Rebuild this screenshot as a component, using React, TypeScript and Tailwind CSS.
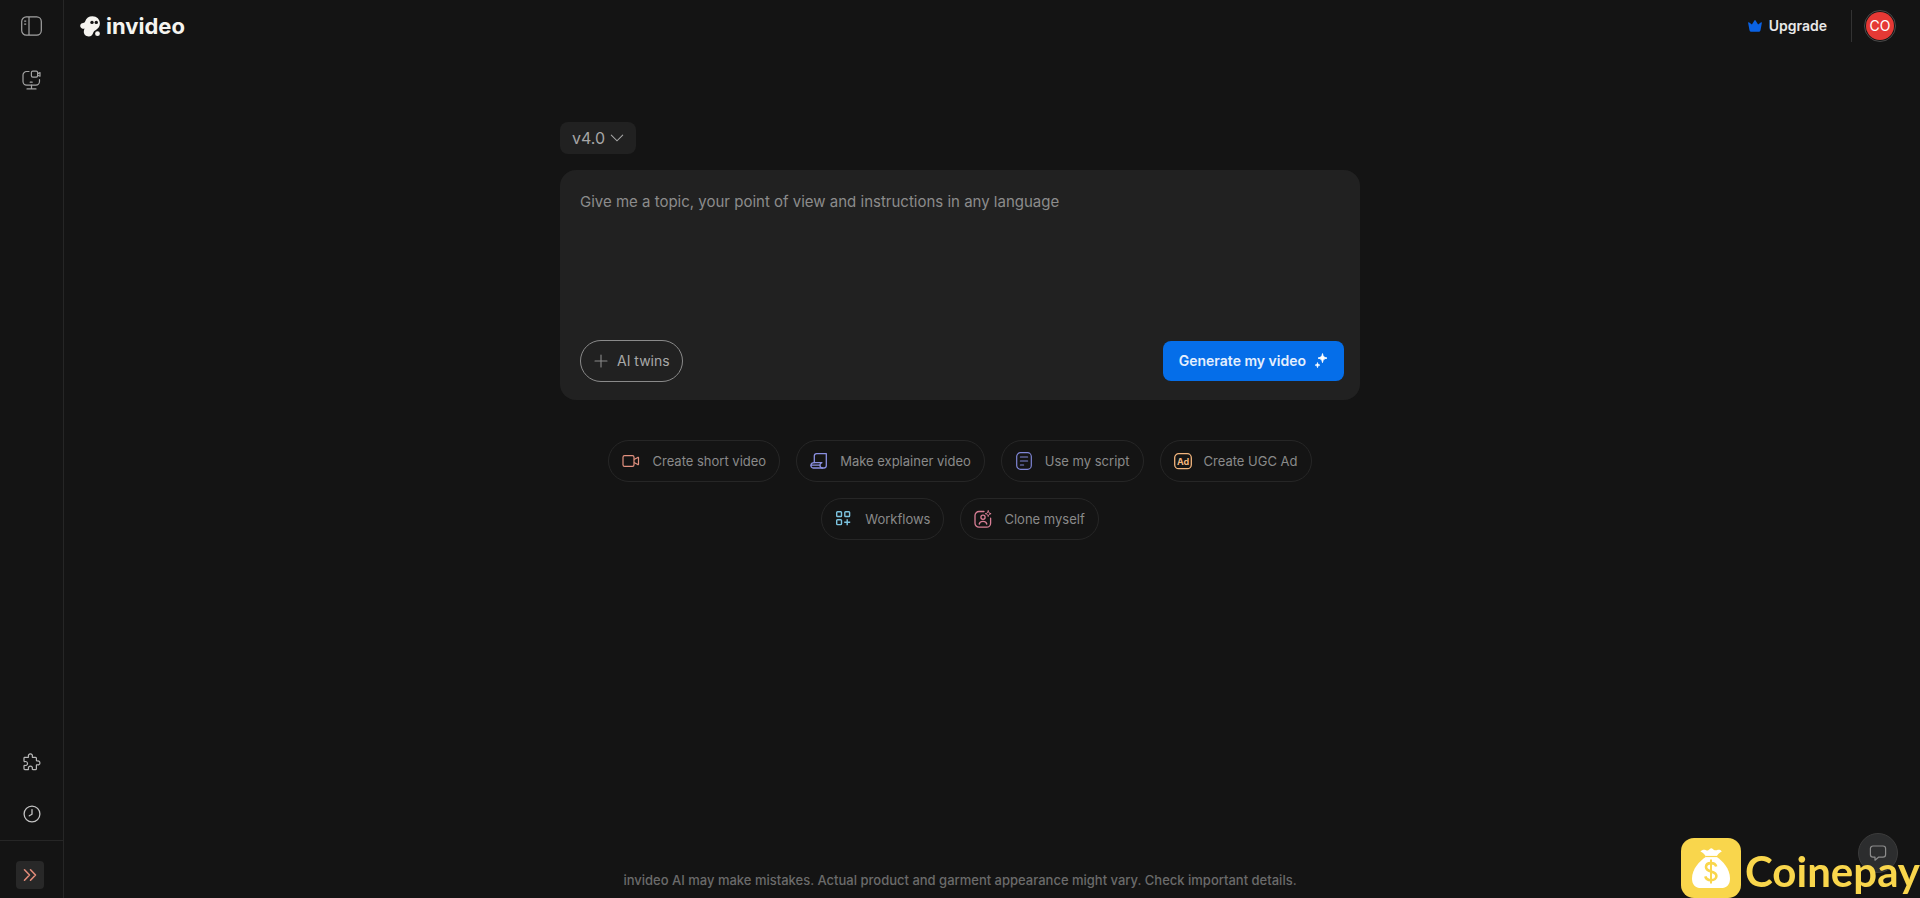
import type { ReactNode } from "react";

type Suggestion = {
  label: string;
  icon: ReactNode;
};

function SidebarIcon() {
  return (
    <svg width="21" height="20" viewBox="0 0 21 20" fill="none" stroke="#a3a3a3" strokeWidth="1.2">
      <rect x="0.7" y="0.9" width="19.6" height="18.2" rx="4.6" />
      <path d="M8 1v18" />
      <path d="M3.2 5.2h2M3.2 8.2h2" />
    </svg>
  );
}

function StudioIcon() {
  return (
    <svg width="19" height="20" viewBox="0 0 19 20" fill="none" stroke="#a3a3a3" strokeWidth="1.2" strokeLinecap="round" strokeLinejoin="round">
      <path d="M7 1.500H4.600A3.600 3.600 0 0 0 1 5.100v6.400a3.600 3.600 0 0 0 3.600 3.600h9.300a3.600 3.600 0 0 0 3.600-3.600V9.600" />
      <rect x="9.400" y="1.200" width="6.200" height="6" rx="1.400" />
      <path d="M15.600 3.600l2.400-1v3.600l-2.400-1" />
      <path d="M8.200 12.200h2M9.500 15.200v3.600M5 18.900h9" />
    </svg>
  );
}

function PuzzleIcon() {
  return (
    <svg width="18" height="18" viewBox="0 0 18 18" fill="none" stroke="#b8b8b8" strokeWidth="1.2" strokeLinejoin="round">
      <path d="M1.400 4.400h3.500c.5 0 .8-.4.6-.9a2 2 0 1 1 3.800 0c-.2.500.1.900.6.900h2.600c.5 0 .9.400.9.900v2c0 .5.400.8.900.7a2 2 0 1 1 0 3.800c-.5-.2-.9.100-.9.600v3.300c0 .5-.4.900-.9.900H10c-.5 0-.8-.4-.7-.9a2 2 0 1 0-3.800 0c.2.500-.1.900-.6.900H1.900c-.5 0-.9-.4-.9-.9v-2.600c0-.5.400-.8.900-.7a2 2 0 1 0 0-3.800c-.5.200-.9-.1-.9-.6V4.900z" />
    </svg>
  );
}

function ClockIcon() {
  return (
    <svg width="18" height="18" viewBox="0 0 18 18" fill="none" stroke="#c4c4c4" strokeWidth="1.3" strokeLinecap="round" strokeLinejoin="round">
      <circle cx="9" cy="9" r="7.9" />
      <path d="M9 4.6v4.6L6.3 10.8" />
    </svg>
  );
}

function Mascot() {
  return (
    <svg width="21" height="21" viewBox="0 0 21 21">
      <path
        d="M12.400.3c4.500 0 7.500 3.200 7.500 7.300 0 3-1.600 5-3.700 6.100-1.600.900-2.600 1.700-3 3.100-.6 2.200-2.100 3.700-4.500 3.700-2.900 0-4.900-2.100-4.900-4.700 0-1.300.3-2.300.8-3.300-.7.300-1.300.4-2 .200C1.100 12.300.2 11.200.2 9.800c0-1.700 1.300-2.800 3-2.900.9-.1 1.500-.5 1.900-1.500C6.200 2.200 8.900.3 12.400.3z"
        fill="#f5f4f0"
      />
      <circle cx="17.500" cy="17.700" r="2.400" fill="#f5f4f0" />
      <circle cx="12" cy="6.400" r="1.700" fill="#141414" />
      <circle cx="16.300" cy="6.400" r="1.700" fill="#141414" />
    </svg>
  );
}

function CrownIcon() {
  return (
    <svg width="14" height="12" viewBox="0 0 14 12" fill="#0a62e4">
      <path d="M.9 2.300 3.900 4.400 6.400.6a.7.7 0 0 1 1.200 0l2.500 3.800 3-2.100c.4-.3.900 0 .8.5l-1.400 7.500A1.800 1.800 0 0 1 10.700 11.800H3.300A1.800 1.800 0 0 1 1.500 10.300L.1 2.800c-.1-.5.4-.8.8-.5z" />
    </svg>
  );
}

function SparklesIcon() {
  return (
    <svg width="14" height="16" viewBox="0 0 14 16" fill="#fff">
      <path d="M8.500.6c.5 3 1.300 3.800 4.500 4.500-3.200.7-4 1.500-4.500 4.500C8 6.600 7.200 5.800 4 5.100 7.200 4.400 8 3.600 8.500.6z" stroke="#fff" strokeWidth=".9" strokeLinejoin="round" />
      <path d="M3.500 9.600c.3 1.600.8 2.100 2.300 2.500-1.500.4-2 .9-2.300 2.500-.3-1.600-.8-2.100-2.300-2.500 1.500-.4 2-.9 2.300-2.500z" stroke="#fff" strokeWidth=".8" strokeLinejoin="round" />
    </svg>
  );
}

const suggestions: Suggestion[] = [
  {
    label: "Create short video",
    icon: (
      <svg width="18" height="18" viewBox="0 0 18 18" fill="none" stroke="#e2917f" strokeWidth="1.2" strokeLinejoin="round">
        <rect x="1" y="3.600" width="11" height="10.800" rx="1.600" />
        <path d="M12 7.600l3.800-2.200c.4-.2.700 0 .7.400v6.400c0 .4-.3.600-.7.400L12 10.400" />
      </svg>
    ),
  },
  {
    label: "Make explainer video",
    icon: (
      <svg width="18" height="18" viewBox="0 0 18 18" fill="none" stroke="#8a8fe0" strokeWidth="1.300" strokeLinejoin="round" strokeLinecap="round">
        <path d="M4.300 10.600V4A2.400 2.400 0 0 1 6.700 1.600h9.600v11.900a2.500 2.500 0 0 1-2.500 2.500H3.200A2.300 2.300 0 0 1 1 13.200h8.900" />
        <path d="M4.300 10.600h7.600c-1.400.5-2 1.500-2 2.600 0 1.500 1 2.500 2.500 2.800" />
        <path d="M1 13.200c.1-1.600 1.200-2.600 3.300-2.600" />
      </svg>
    ),
  },
  {
    label: "Use my script",
    icon: (
      <svg width="18" height="18" viewBox="0 0 18 18" fill="none" stroke="#7f86d6" strokeWidth="1.200" strokeLinecap="round">
        <rect x="1.700" y=".7" width="14.600" height="16.600" rx="3.800" />
        <path d="M5.400 5h7.200M5.400 9h7.200M5.400 13h3.200" />
      </svg>
    ),
  },
  {
    label: "Create UGC Ad",
    icon: (
      <svg width="18" height="18" viewBox="0 0 18 18" fill="none" stroke="#f2b57d" strokeWidth="1.300">
        <rect x=".7" y="1.700" width="16.600" height="15" rx="4" />
        <text x="9" y="13" textAnchor="middle" fontFamily="Inter, sans-serif" fontSize="9" fontWeight="700" fill="#f2b57d" stroke="none">
          Ad
        </text>
      </svg>
    ),
  },
  {
    label: "Workflows",
    icon: (
      <svg width="18" height="18" viewBox="0 0 18 18" fill="none" stroke="#7cc4e0" strokeWidth="1.400">
        <rect x="1.700" y="1.700" width="4.800" height="4.800" rx=".8" />
        <rect x="9.800" y="1.700" width="4.800" height="4.800" rx=".8" />
        <rect x="1.700" y="9.800" width="4.800" height="4.800" rx=".8" />
        <path d="M12.200 9.200v6M9.200 12.200h6" />
      </svg>
    ),
  },
  {
    label: "Clone myself",
    icon: (
      <svg width="18" height="18" viewBox="0 0 18 18" fill="none" stroke="#d97f96" strokeWidth="1.300" strokeLinecap="round" strokeLinejoin="round">
        <path d="M10 1.500H5A4 4 0 0 0 1 5.500v7.700a4 4 0 0 0 4 4h7.600a4 4 0 0 0 4-4V8.200" />
        <circle cx="9" cy="7.300" r="2.100" />
        <path d="M5.200 14c.4-1.700 1.900-2.700 3.800-2.700s3.400 1 3.800 2.700" />
        <path d="M14.200.9c.3 1.800.9 2.400 2.900 2.800-2 .4-2.600 1-2.900 2.800-.3-1.800-.9-2.400-2.900-2.800 2-.4 2.600-1 2.900-2.800z" strokeWidth="1" />
      </svg>
    ),
  },
];

function SuggestionChip({ label, icon }: Suggestion) {
  return (
    <button
      type="button"
      className="flex h-[42px] items-center gap-3 rounded-full border border-[#262626] px-[13px] text-[13px] leading-5 text-[#8a8a8a] hover:bg-[#1c1c1c]"
    >
      {icon}
      <span>{label}</span>
    </button>
  );
}

function Sidebar() {
  return (
    <aside className="flex w-16 shrink-0 flex-col items-center border-r border-[#262626]">
      <button type="button" aria-label="Toggle sidebar" className="mt-4 flex h-5 items-center">
        <SidebarIcon />
      </button>
      <button type="button" aria-label="Studio" className="mt-[34px] flex h-5 items-center">
        <StudioIcon />
      </button>
      <div className="mt-auto flex w-full flex-col items-center gap-[34px] border-b border-[#262626] pb-[17px]">
        <button type="button" aria-label="Extensions">
          <PuzzleIcon />
        </button>
        <button type="button" aria-label="History">
          <ClockIcon />
        </button>
      </div>
      <div className="flex w-full px-4 pt-5 pb-[9px]">
        <button type="button" aria-label="Expand" className="flex size-7 items-center justify-center rounded bg-[#282828]">
          <svg width="14" height="14" viewBox="0 0 14 14" fill="none" stroke="#e08a78" strokeWidth="1.600" strokeLinecap="round" strokeLinejoin="round">
            <path d="M1.500 1.800 6.500 7l-5 5.200M7.500 1.800 12.500 7l-5 5.200" />
          </svg>
        </button>
      </div>
    </aside>
  );
}

function Header() {
  return (
    <header className="flex h-[52px] items-center justify-between pr-6 pl-4">
      <a href="#" className="flex items-center gap-[5px]">
        <Mascot />
        <span className="text-[22px] font-bold text-[#f5f4f0]">invideo</span>
      </a>
      <div className="flex items-center">
        <button type="button" className="flex items-center gap-[7px] text-sm font-semibold text-[#e8e8e8]">
          <CrownIcon />
          Upgrade
        </button>
        <div className="mr-3 ml-6 h-8 w-px bg-[#333]" />
        <button
          type="button"
          aria-label="Account"
          className="flex size-8 items-center justify-center rounded-full border border-[#4a4a4a] p-px"
        >
          <span className="flex size-7 items-center justify-center rounded-full bg-[#e53935] text-sm text-white">CO</span>
        </button>
      </div>
    </header>
  );
}

function Composer() {
  return (
    <div className="w-full max-w-[800px]">
      <button
        type="button"
        className="flex h-8 items-center gap-[5px] rounded-lg bg-[#212121] px-3 text-base text-[#a6a6a6]"
      >
        v4.0
        <svg width="14" height="14" viewBox="0 0 14 14" fill="none" stroke="#a6a6a6" strokeWidth="1.100" strokeLinecap="round">
          <path d="M1.300 4.200 7 9.800l5.700-5.600" />
        </svg>
      </button>
      <div className="mt-4 flex h-[230px] flex-col rounded-2xl bg-[#212121] pt-5 pr-4 pb-[18px] pl-5">
        <textarea
          aria-label="Prompt"
          placeholder="Give me a topic, your point of view and instructions in any language"
          className="w-full flex-1 resize-none bg-transparent text-[15px] leading-6 text-[#d4d4d4] outline-none placeholder:text-[#8c8c8c]"
        />
        <div className="flex items-center justify-between">
          <button
            type="button"
            className="flex h-[42px] items-center gap-2 rounded-full border border-[#8a8a8a] px-3 text-sm text-[#a8a8a8]"
          >
            <svg width="16" height="16" viewBox="0 0 16 16" stroke="#8a8a8a" strokeWidth="1.100" strokeLinecap="round">
              <path d="M8 2v12M2 8h12" />
            </svg>
            AI twins
          </button>
          <button
            type="button"
            className="flex h-10 items-center gap-2 rounded-lg bg-[#056ee9] px-4 text-sm font-semibold text-[#e4effd]"
          >
            Generate my video
            <SparklesIcon />
          </button>
        </div>
      </div>
    </div>
  );
}

function Watermark() {
  return (
    <div className="pointer-events-none fixed right-0 bottom-0 flex items-end gap-1">
      <svg width="60" height="60" viewBox="0 0 60 60">
        <rect width="60" height="60" rx="13" fill="#f9d64c" />
        <path
          d="M19.500 13.500c1.500-1.800 3.500-2 5.500-1.300 1.800.6 2.900-.2 3.800-1.300.8-.9 2.200-.9 3 0 .9 1.100 2.200 1.800 4 1.300 2-.6 3.700-.5 5 1.300-2.500 1.200-4.300 3-5.300 5.500H25c-1-2.500-3-4.300-5.500-5.500z"
          fill="#fff"
        />
        <path
          d="M25 18.700h10.500c6.500 4.500 13.500 12 13.500 22 0 6-3.500 9.300-9 9.300H20c-5.500 0-9-3.300-9-9.300 0-10 7.500-17.500 14-22z"
          fill="#fff"
        />
        <path d="M24.500 18.500h11.500" stroke="#f9d64c" strokeWidth="1.200" />
        <path d="M30 21.500v24" stroke="#f9d64c" strokeWidth="2" />
        <path
          d="M35.200 28.500c-.6-2.200-2.600-3.400-5.200-3.400-3 0-5 1.600-5 4s1.800 3.500 5 4.300c3.500.900 5.400 2 5.400 4.600 0 2.500-2.200 4.200-5.400 4.200-3 0-5.100-1.400-5.700-3.800"
          fill="none"
          stroke="#f9d64c"
          strokeWidth="2.600"
        />
      </svg>
      <span className="font-[Lato,sans-serif] text-[42px] leading-[54px] font-bold text-[#f9d64c]">Coinepay</span>
    </div>
  );
}

export default function App() {
  return (
    <div className="flex min-h-screen bg-[#141414] font-[Inter,sans-serif] text-white">
      <Sidebar />
      <div className="flex min-w-0 flex-1 flex-col">
        <Header />
        <main className="flex flex-1 flex-col items-center pt-[70px] pr-16">
          <Composer />
          <div className="mt-10 flex max-w-[720px] flex-wrap justify-center gap-4">
            {suggestions.map((s) => (
              <SuggestionChip key={s.label} label={s.label} icon={s.icon} />
            ))}
          </div>
          <p className="mt-auto pb-2 text-[13px] font-medium text-[#6b6b6b]">
            invideo AI may make mistakes. Actual product and garment appearance might vary. Check important details.
          </p>
        </main>
      </div>
      <button
        type="button"
        aria-label="Chat"
        className="fixed right-[22px] bottom-[25px] flex size-10 items-center justify-center rounded-full border border-[#3c3c3c] bg-[#2c2d2e]"
      >
        <svg width="18" height="18" viewBox="0 0 18 18" fill="none" stroke="#8c8c8c" strokeWidth="1.200" strokeLinejoin="round">
          <path d="M4 2h10a2.600 2.600 0 0 1 2.600 2.600v6A2.600 2.600 0 0 1 14 13.200H9.500L6 16.200v-3H4a2.600 2.600 0 0 1-2.600-2.600v-6A2.600 2.600 0 0 1 4 2z" />
        </svg>
      </button>
      <Watermark />
    </div>
  );
}
